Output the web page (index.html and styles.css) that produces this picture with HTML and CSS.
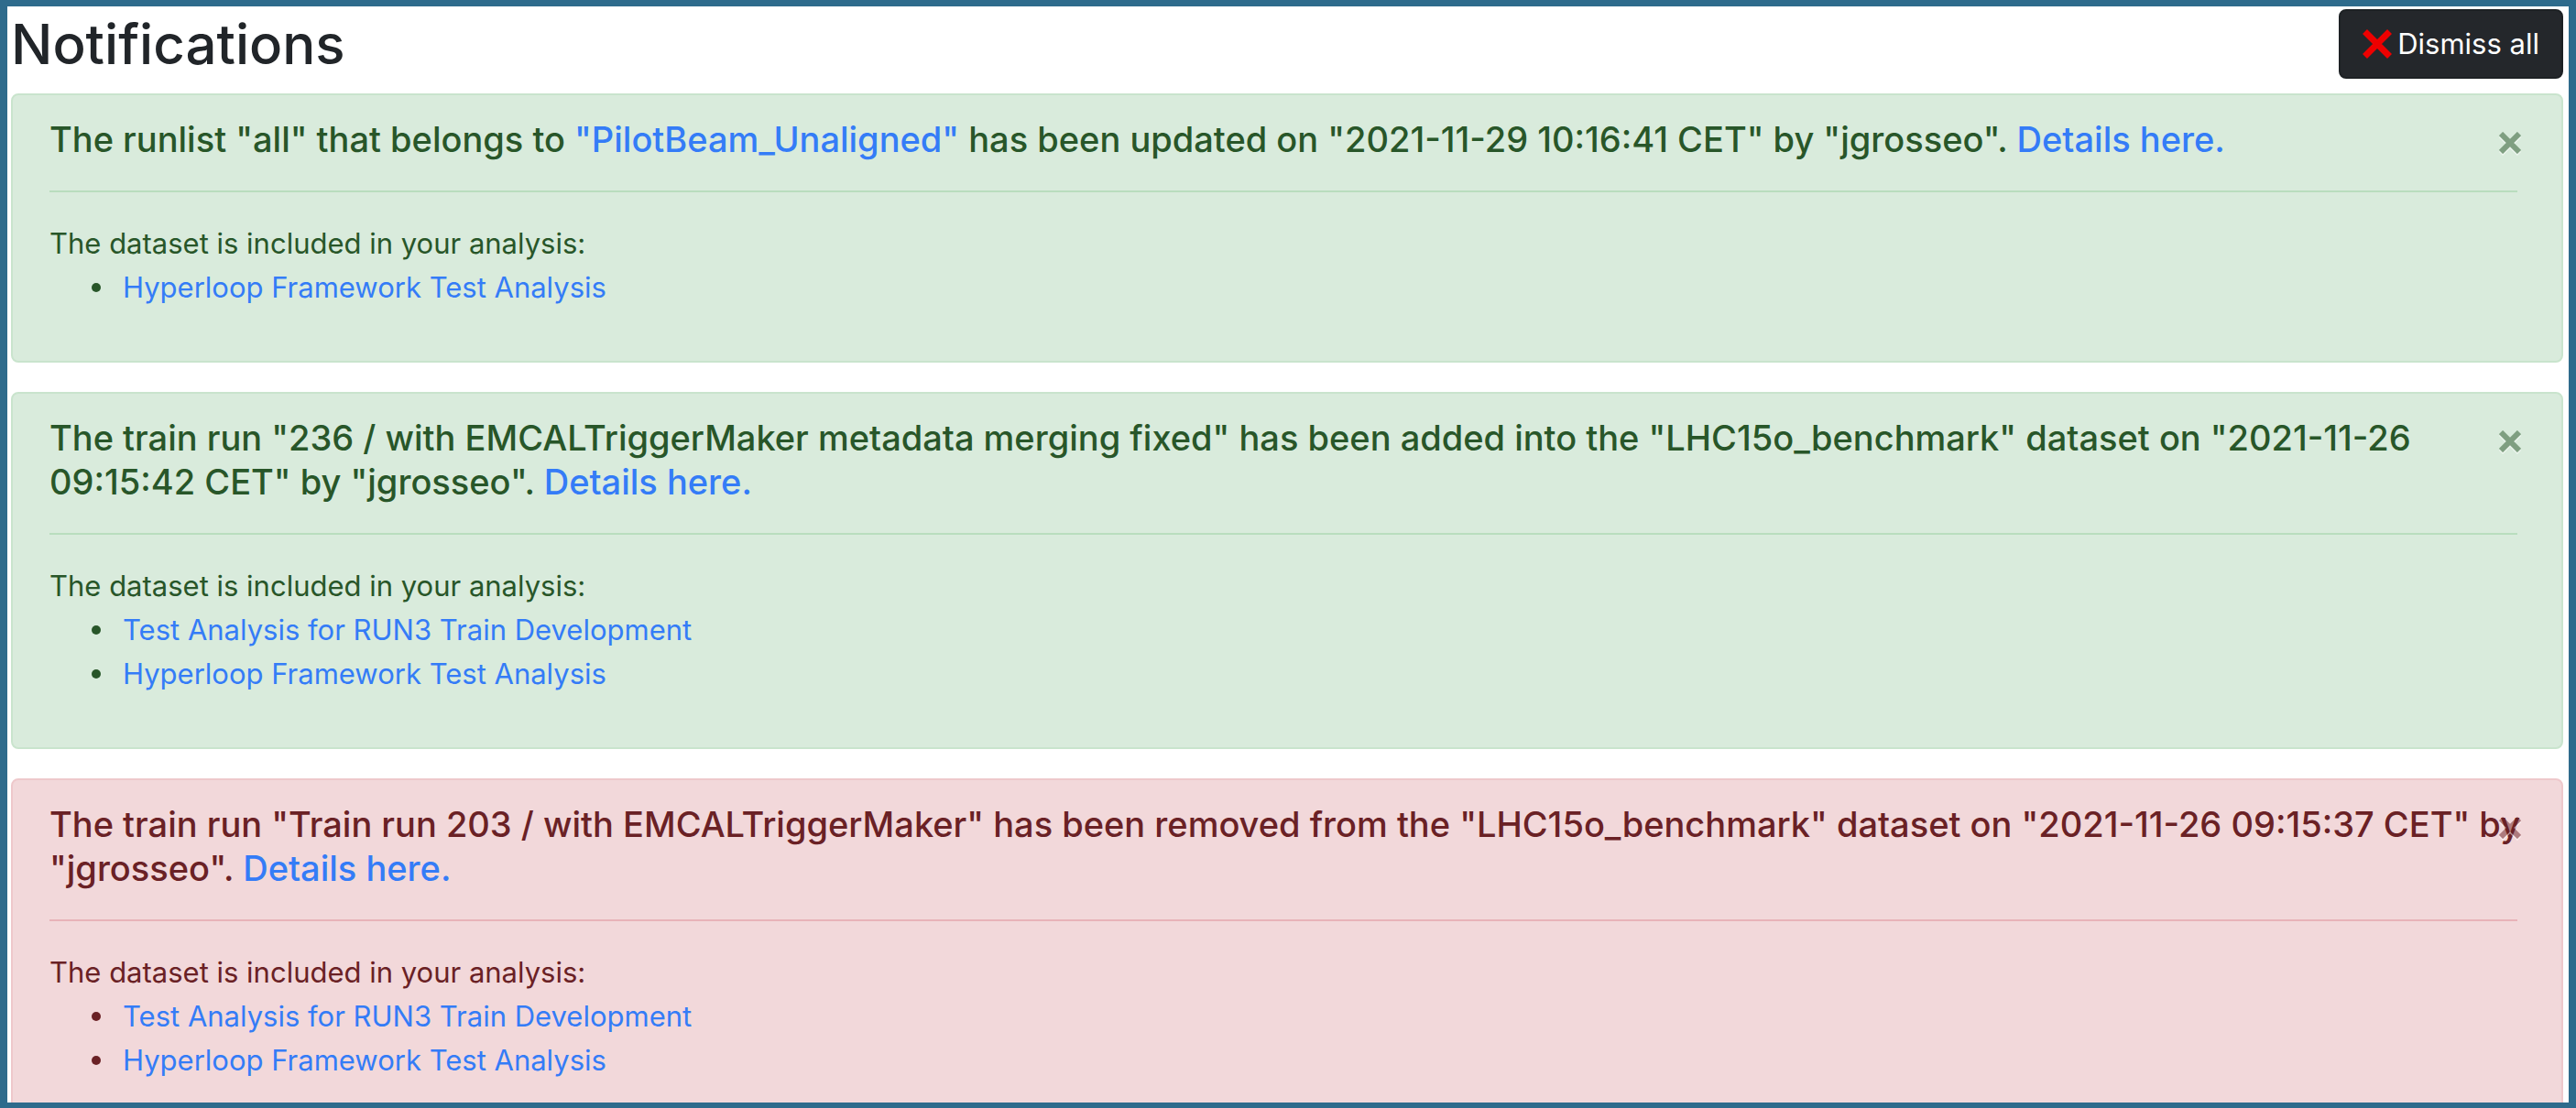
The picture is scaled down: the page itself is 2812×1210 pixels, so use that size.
FILE: index.html
```html
<!DOCTYPE html>
<html lang="en">
<head>
<meta charset="utf-8">
<title>Notifications</title>
<link rel="stylesheet" href="styles.css">
</head>
<body>
<main class="page">
  <header class="page-header">
    <h2 class="page-title">Notifications</h2>
    <button type="button" class="btn-dark">
      <svg class="btn-icon" viewBox="0 0 32 32" aria-hidden="true"><path d="M2.5 2.5 29.5 29.5M29.5 2.5 2.5 29.5"/></svg>
      <span>Dismiss all</span>
    </button>
  </header>

  <section class="alert alert-success">
    <h4 class="alert-heading">The runlist "all" that belongs to <a href="#">"PilotBeam_Unaligned"</a> has been updated on "2021-11-29 10:16:41 CET" by "jgrosseo". <a href="#">Details here.</a></h4>
    <button type="button" class="close" aria-label="Close"><svg class="close-icon" viewBox="0 0 24 24" aria-hidden="true"><path d="M2 2 22 22M22 2 2 22"/></svg></button>
    <hr class="rule">
    <p class="text">The dataset is included in your analysis:</p>
    <ul class="list">
      <li><a href="#">Hyperloop Framework Test Analysis</a></li>
    </ul>
  </section>

  <section class="alert alert-success">
    <h4 class="alert-heading">The train run "236 / with EMCALTriggerMaker metadata merging fixed" has been added into the "LHC15o_benchmark" dataset on "2021-11-26 09:15:42 CET" by "jgrosseo". <a href="#">Details here.</a></h4>
    <button type="button" class="close" aria-label="Close"><svg class="close-icon" viewBox="0 0 24 24" aria-hidden="true"><path d="M2 2 22 22M22 2 2 22"/></svg></button>
    <hr class="rule">
    <p class="text">The dataset is included in your analysis:</p>
    <ul class="list">
      <li><a href="#">Test Analysis for RUN3 Train Development</a></li>
      <li><a href="#">Hyperloop Framework Test Analysis</a></li>
    </ul>
  </section>

  <section class="alert alert-danger">
    <h4 class="alert-heading">The train run "Train run 203 / with EMCALTriggerMaker" has been removed from the "LHC15o_benchmark" dataset on "2021-11-26 09:15:37 CET" by "jgrosseo". <a href="#">Details here.</a></h4>
    <button type="button" class="close" aria-label="Close"><svg class="close-icon" viewBox="0 0 24 24" aria-hidden="true"><path d="M2 2 22 22M22 2 2 22"/></svg></button>
    <hr class="rule">
    <p class="text">The dataset is included in your analysis:</p>
    <ul class="list">
      <li><a href="#">Test Analysis for RUN3 Train Development</a></li>
      <li><a href="#">Hyperloop Framework Test Analysis</a></li>
    </ul>
  </section>
</main>
</body>
</html>
```
FILE: styles.css
```css
* {
  box-sizing: border-box;
}

body {
  margin: 0;
  background: #fff;
  color: #212529;
  font-family: Inter, "Liberation Sans", sans-serif;
  font-size: 31px;
  line-height: 48px;
}

.page {
  height: 100vh;
  padding: 3px 6px 0 4px;
  border: solid #2e6b8c;
  border-width: 7px 8px 6px;
  overflow: hidden;
}

.page-header {
  display: flex;
  align-items: center;
  justify-content: space-between;
  margin-bottom: 16px;
}

.page-title {
  margin: 0;
  font-size: 60px;
  font-weight: 500;
  line-height: 76px;
}

.btn-dark {
  display: flex;
  align-items: center;
  gap: 6px;
  padding: 12px 24px;
  border: 2px solid #1d2124;
  border-radius: 8px;
  background: #24272b;
  color: #fff;
  font: inherit;
}

.btn-icon {
  width: 32px;
  height: 32px;
  fill: none;
  stroke: #ee0000;
  stroke-width: 7;
}

.alert {
  position: relative;
  margin-bottom: 32px;
  padding: 24px 48px 24px 40px;
  border: 2px solid;
  border-radius: 8px;
}

.alert-success {
  --rule: #b9ddbe;
  border-color: #c9e4cd;
  background: #d9ebdc;
  color: #285629;
}

.alert-danger {
  --rule: #e8b3b8;
  border-color: #eec8cb;
  background: #f2d8da;
  color: #6a2125;
}

.alert a {
  color: #347cf7;
  text-decoration: none;
}

.alert-heading {
  margin: 0 -16px 0 0;
  font-size: 38px;
  font-weight: 500;
  line-height: 48px;
}

.rule {
  height: 2px;
  margin: 32px 0;
  border: 0;
  background: var(--rule);
}

.text {
  margin: 0;
}

.list {
  margin: 0 0 32px;
  padding-left: 46px;
  list-style: none;
}

.list li {
  display: flex;
  align-items: center;
  gap: 24px;
}

.list li::before {
  content: "";
  width: 10px;
  height: 10px;
  border-radius: 50%;
  background: currentColor;
}

.close {
  position: absolute;
  top: 24px;
  right: 32px;
  display: flex;
  padding: 16px 12px;
  border: 0;
  background: none;
  opacity: 0.5;
}

.alert-success .close {
  color: #285629;
}

.alert-danger .close {
  color: #6a2125;
}

.close-icon {
  width: 24px;
  height: 24px;
  fill: none;
  stroke: currentColor;
  stroke-width: 6;
  filter: drop-shadow(0 2px 0 #fff);
}
```
